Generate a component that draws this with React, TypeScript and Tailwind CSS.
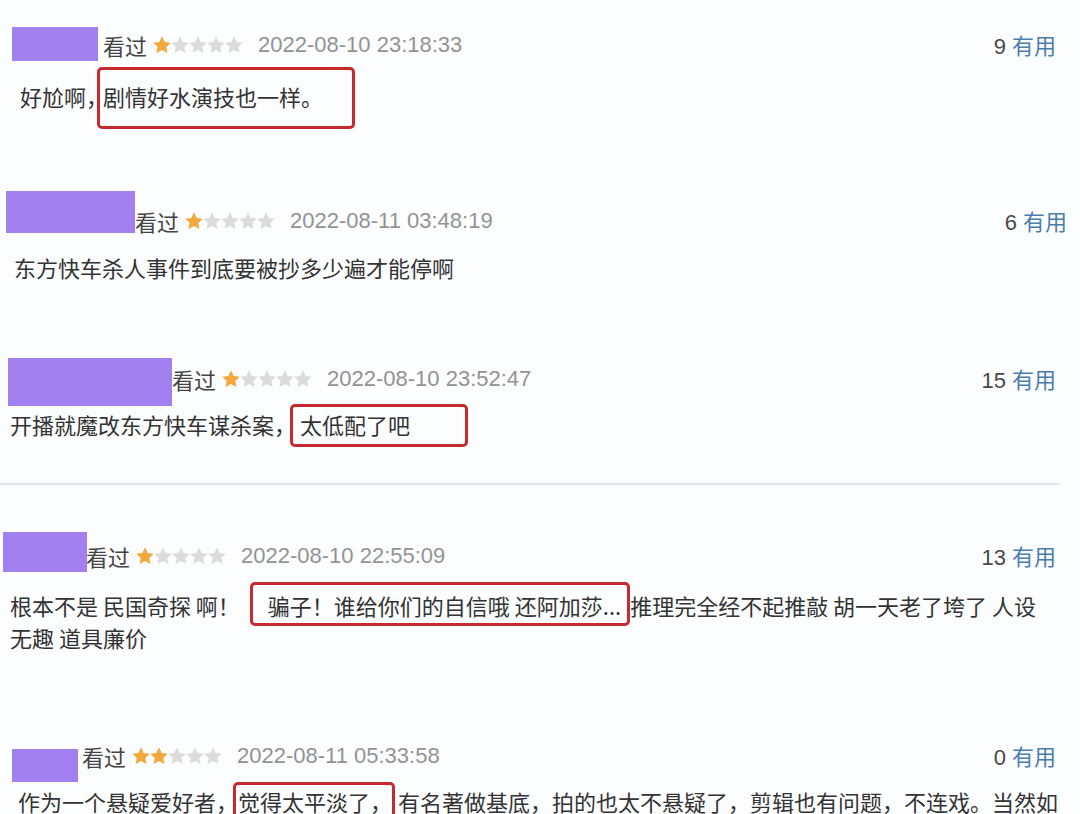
import type { ReactNode } from 'react'

const cjk = "font-['Noto_Sans_CJK_SC',sans-serif]"

interface Review {
    id: number
    wrap: string
    row: string
    box: string
    meta: string
    stars: number
    date: string
    votes: number
    bodyCls: string
    body: ReactNode
}

function Mark({ className, children }: { className: string; children: ReactNode }) {
    return (
        <span className={`border-[3px] border-[#c62a2e] rounded-[5px] ${className}`}>
            {children}
        </span>
    )
}

function Stars({ n }: { n: number }) {
    return (
        <div className="flex">
            {[0, 1, 2, 3, 4].map(i => (
                <svg key={i} width="18" height="18" viewBox="2 1.8 20 20">
                    <path
                        d="M12 2.2l2.95 6.2 6.75.85-4.95 4.7 1.3 6.75L12 17.4l-6.05 3.3 1.3-6.75-4.95-4.7 6.75-.85z"
                        fill={i < n ? '#f2a93b' : '#dcdcdc'}
                    />
                </svg>
            ))}
        </div>
    )
}

const reviews: Review[] = [
    {
        id: 1,
        wrap: 'mt-[27px]',
        row: 'pl-[12px] pr-[24px]',
        box: 'w-[86px] h-[34px]',
        meta: 'ml-[5px] mt-[4px]',
        stars: 1,
        date: '2022-08-10 23:18:33',
        votes: 9,
        bodyCls: 'mt-[19px] pl-[20px]',
        body: (
            <>
                好尬啊，
                <Mark className="-ml-[11px] pl-[3px] pr-[29px] pt-[10px] pb-[14px]">剧情好水演技也一样。</Mark>
            </>
        ),
    },
    {
        id: 2,
        wrap: 'mt-[79px]',
        row: 'pl-[6px] pr-[13px]',
        box: 'w-[129px] h-[42px]',
        meta: 'ml-0 mt-[16px]',
        stars: 1,
        date: '2022-08-11 03:48:19',
        votes: 6,
        bodyCls: 'mt-[16px] pl-[14px]',
        body: <>东方快车杀人事件到底要被抄多少遍才能停啊</>,
    },
    {
        id: 3,
        wrap: 'mt-[75px]',
        row: 'pl-[8px] pr-[24px]',
        box: 'w-[164px] h-[48px]',
        meta: 'ml-0 mt-[7px]',
        stars: 1,
        date: '2022-08-10 23:52:47',
        votes: 15,
        bodyCls: 'mt-[2px] pl-[10px]',
        body: (
            <>
                开播就魔改东方快车谋杀案，
                <Mark className="-ml-[6px] pl-[7px] pr-[55px] pt-[1px] pb-[4px]">太低配了吧</Mark>
            </>
        ),
    },
]

const reviewsAfterLine: Review[] = [
    {
        id: 4,
        wrap: 'mt-[47px]',
        row: 'pl-[3px] pr-[24px]',
        box: 'w-[84px] h-[40px]',
        meta: '-ml-[1px] mt-[10px]',
        stars: 1,
        date: '2022-08-10 22:55:09',
        votes: 13,
        bodyCls: 'mt-[17px] pl-[10px]',
        body: (
            <>
                根本不是 民国奇探 啊！
                <Mark className="ml-[10px] pl-[15px] pr-[6px] pt-[4px] pb-[2px]">骗子！谁给你们的自信哦 还阿加莎...</Mark>
                推理完全经不起推敲 胡一天老了垮了 人设
                <br />
                无趣 道具廉价
            </>
        ),
    },
    {
        id: 5,
        wrap: 'mt-[89px]',
        row: 'pl-[12px] pr-[24px]',
        box: 'w-[66px] h-[33px] mt-[7px]',
        meta: 'ml-[4px] mt-0',
        stars: 2,
        date: '2022-08-11 05:33:58',
        votes: 0,
        bodyCls: 'mt-[3px] pl-[18px]',
        body: (
            <>
                作为一个悬疑爱好者，
                <Mark className="-ml-[5px] pl-[2px] pr-0 pt-0 pb-[4px]">觉得太平淡了，</Mark>
                <span className="ml-[3px]">有名著做基底，拍的也太不悬疑了，剪辑也有问题，不连戏。当然如</span>
            </>
        ),
    },
]

function ReviewItem({ r }: { r: Review }) {
    return (
        <div className={r.wrap}>
            {/* cabecera: usuario tapado, estado, estrellas, fecha, votos */}
            <div className={`flex items-start ${r.row}`}>
                <div className={`shrink-0 bg-[#a380f0] ${r.box}`} />
                <div className={`flex flex-1 items-center h-[28px] ${r.meta}`}>
                    <span className={`${cjk} text-[22px] leading-[28px] text-[#444]`}>看过</span>
                    <div className="ml-[6px]">
                        <Stars n={r.stars} />
                    </div>
                    <span className="ml-[15px] font-['Liberation_Sans',sans-serif] text-[22px] leading-[28px] text-[#939393]">
                        {r.date}
                    </span>
                    <span className="ml-auto text-[22px] leading-[28px]">
                        <span className="font-['Liberation_Sans',sans-serif] text-[#494949]">{r.votes}</span>
                        <span className={`${cjk} ml-[6px] text-[#4a7cad]`}>有用</span>
                    </span>
                </div>
            </div>
            <div className={`${cjk} text-[22px] leading-[32px] text-[#333] whitespace-nowrap ${r.bodyCls}`}>
                {r.body}
            </div>
        </div>
    )
}

export default function App() {
    return (
        <div className="w-[1080px] h-[814px] overflow-hidden bg-[#fcfdfe] flex flex-col">
            {reviews.map(r => (
                <ReviewItem key={r.id} r={r} />
            ))}
            <div className="mt-[43px] mr-[20px] border-t-2 border-[#e4e6ea]" />
            {reviewsAfterLine.map(r => (
                <ReviewItem key={r.id} r={r} />
            ))}
        </div>
    )
}
